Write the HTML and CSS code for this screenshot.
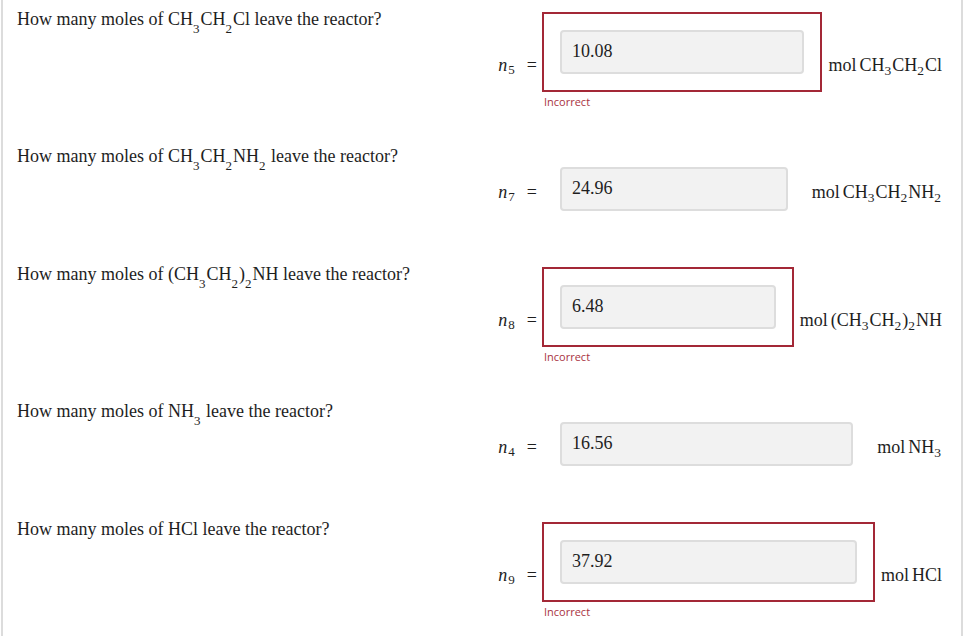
FILE: index.html
```html
<!DOCTYPE html>
<html>
<head>
<meta charset="utf-8">
<link rel="stylesheet" href="styles.css">
</head>
<body>
<div class="page">
  <div class="block incorrect">
    <div class="row">
      <div class="question">How many moles of CH<span class="qs">3</span>CH<span class="qs">2</span>Cl leave the reactor?</div>
      <div class="label"><i>n</i><span class="ls">5</span><span class="eq">=</span></div>
      <div class="box"><input class="field" type="text" value="10.08"></div>
      <div class="unit">mol<span class="thin"></span>CH<span class="us">3</span>CH<span class="us">2</span>Cl</div>
    </div>
    <div class="msg">Incorrect</div>
  </div>

  <div class="block">
    <div class="row">
      <div class="question">How many moles of CH<span class="qs">3</span>CH<span class="qs">2</span>NH<span class="qs">2</span> leave the reactor?</div>
      <div class="label"><i>n</i><span class="ls">7</span><span class="eq">=</span></div>
      <div class="box"><input class="field" type="text" value="24.96"></div>
      <div class="unit">mol<span class="thin"></span>CH<span class="us">3</span>CH<span class="us">2</span>NH<span class="us">2</span></div>
    </div>
  </div>

  <div class="block incorrect">
    <div class="row">
      <div class="question">How many moles of (CH<span class="qs">3</span>CH<span class="qs">2</span>)<span class="qs">2</span>NH leave the reactor?</div>
      <div class="label"><i>n</i><span class="ls">8</span><span class="eq">=</span></div>
      <div class="box"><input class="field" type="text" value="6.48"></div>
      <div class="unit">mol<span class="thin"></span>(CH<span class="us">3</span>CH<span class="us">2</span>)<span class="us">2</span>NH</div>
    </div>
    <div class="msg">Incorrect</div>
  </div>

  <div class="block">
    <div class="row">
      <div class="question">How many moles of NH<span class="qs">3</span> leave the reactor?</div>
      <div class="label"><i>n</i><span class="ls">4</span><span class="eq">=</span></div>
      <div class="box"><input class="field" type="text" value="16.56"></div>
      <div class="unit">mol<span class="thin"></span>NH<span class="us">3</span></div>
    </div>
  </div>

  <div class="block incorrect">
    <div class="row">
      <div class="question">How many moles of HCl leave the reactor?</div>
      <div class="label"><i>n</i><span class="ls">9</span><span class="eq">=</span></div>
      <div class="box"><input class="field" type="text" value="37.92"></div>
      <div class="unit">mol<span class="thin"></span>HCl</div>
    </div>
    <div class="msg">Incorrect</div>
  </div>
</div>
</body>
</html>
```
FILE: styles.css
```css
html, body {
  margin: 0;
  padding: 0;
  background: #ffffff;
}

.page {
  margin-left: 1px;
  width: 962px;
  min-height: 636px;
  box-sizing: border-box;
  border-left: 2px solid #dcdcdc;
  border-right: 2px solid #dcdcdc;
  padding: 9px 19px 0 14px;
  font-family: "Liberation Serif", "Times New Roman", serif;
  color: #1e1e1e;
  font-size: 18px;
}

.block {
  margin-bottom: 35px;
}

.block.incorrect {
  margin-bottom: 37px;
}

.row {
  display: flex;
  align-items: flex-start;
}

.question {
  flex: 0 0 470px;
  line-height: 22px;
  margin-top: -1px;
  white-space: nowrap;
}

.qs {
  font-size: 13px;
  line-height: 0;
  position: relative;
  top: 8px;
  margin-right: 1px;
}

.label {
  flex: 0 0 50px;
  text-align: right;
  line-height: 22px;
  margin-right: 5px;
  margin-top: 35px;
  white-space: nowrap;
}

.label i {
  font-family: "Liberation Serif", "Times New Roman", serif;
  font-style: italic;
}

.ls {
  font-size: 13px;
  line-height: 0;
  position: relative;
  top: 3px;
  margin-left: 1px;
}

.eq {
  margin-left: 12px;
}

.box {
  flex: 1 1 auto;
  margin-top: 3px;
  border: 2px solid transparent;
  padding: 16px;
  display: flex;
}

.incorrect .box {
  border-color: #a32836;
}

.incorrect .label,
.incorrect .unit {
  margin-top: 45px;
}

.field {
  flex: 1 1 auto;
  width: 100%;
  height: 44px;
  box-sizing: border-box;
  margin: 0;
  border: 2px solid #dddddd;
  border-radius: 4px;
  background: #f2f2f2;
  padding: 0 10px 2px 10px;
  font-family: "Liberation Serif", "Times New Roman", serif;
  font-size: 18px;
  color: #1e1e1e;
  outline: none;
}

.unit {
  flex: 0 0 auto;
  margin-left: 6px;
  margin-top: 35px;
  line-height: 22px;
  white-space: nowrap;
}

.thin {
  display: inline-block;
  width: 3px;
}

.us {
  font-size: 13.5px;
  line-height: 0;
  position: relative;
  top: 4px;
  margin-right: 1px;
}

.msg {
  margin: 3px 0 0 527px;
  font-family: "Open Sans", sans-serif;
  font-size: 11px;
  line-height: 14px;
  color: #a93342;
}
```
